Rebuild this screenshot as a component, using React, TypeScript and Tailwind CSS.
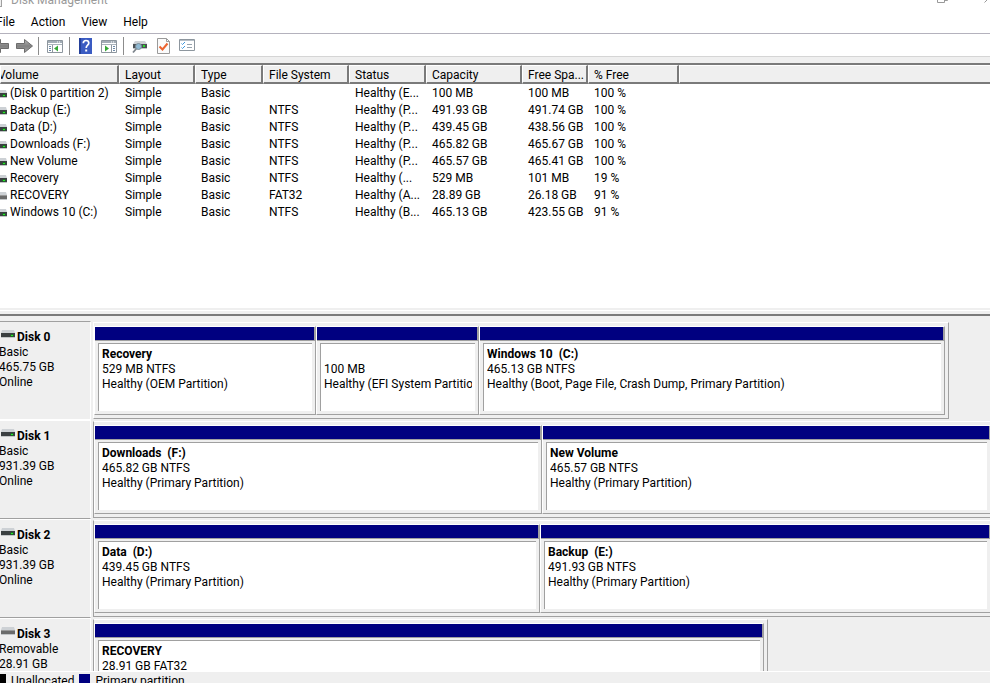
import React from 'react';

const menus = ['File', 'Action', 'View', 'Help'];

const columns = [
  { label: 'Volume', width: 'w-[119px]' },
  { label: 'Layout', width: 'w-[76px]' },
  { label: 'Type', width: 'w-[68px]' },
  { label: 'File System', width: 'w-[86px]' },
  { label: 'Status', width: 'w-[77px]' },
  { label: 'Capacity', width: 'w-[96px]' },
  { label: 'Free Spa...', width: 'w-[66px]' },
  { label: '% Free', width: 'w-[91px]' },
];

const volumes = [
  ['(Disk 0 partition 2)', 'Simple', 'Basic', '', 'Healthy (E...', '100 MB', '100 MB', '100 %'],
  ['Backup (E:)', 'Simple', 'Basic', 'NTFS', 'Healthy (P...', '491.93 GB', '491.74 GB', '100 %'],
  ['Data (D:)', 'Simple', 'Basic', 'NTFS', 'Healthy (P...', '439.45 GB', '438.56 GB', '100 %'],
  ['Downloads (F:)', 'Simple', 'Basic', 'NTFS', 'Healthy (P...', '465.82 GB', '465.67 GB', '100 %'],
  ['New Volume', 'Simple', 'Basic', 'NTFS', 'Healthy (P...', '465.57 GB', '465.41 GB', '100 %'],
  ['Recovery', 'Simple', 'Basic', 'NTFS', 'Healthy (...', '529 MB', '101 MB', '19 %'],
  ['RECOVERY', 'Simple', 'Basic', 'FAT32', 'Healthy (A...', '28.89 GB', '26.18 GB', '91 %'],
  ['Windows 10 (C:)', 'Simple', 'Basic', 'NTFS', 'Healthy (B...', '465.13 GB', '423.55 GB', '91 %'],
];

type Partition = { name: string; size: string; status?: string; share: number };
type Disk = {
  name: string;
  kind: string;
  size: string;
  state?: string;
  removable?: boolean;
  extent: number;
  partitions: Partition[];
};

// extent: how far the disk's frame reaches, in percent of the graph's width
const disks: Disk[] = [
  {
    name: 'Disk 0',
    kind: 'Basic',
    size: '465.75 GB',
    state: 'Online',
    extent: 95.43,
    partitions: [
      { name: 'Recovery', size: '529 MB NTFS', status: 'Healthy (OEM Partition)', share: 220 },
      { name: '', size: '100 MB', status: 'Healthy (EFI System Partition)', share: 161 },
      {
        name: 'Windows 10  (C:)',
        size: '465.13 GB NTFS',
        status: 'Healthy (Boot, Page File, Crash Dump, Primary Partition)',
        share: 464,
      },
    ],
  },
  {
    name: 'Disk 1',
    kind: 'Basic',
    size: '931.39 GB',
    state: 'Online',
    extent: 100.56,
    partitions: [
      { name: 'Downloads  (F:)', size: '465.82 GB NTFS', status: 'Healthy (Primary Partition)', share: 446 },
      { name: 'New Volume', size: '465.57 GB NTFS', status: 'Healthy (Primary Partition)', share: 447 },
    ],
  },
  {
    name: 'Disk 2',
    kind: 'Basic',
    size: '931.39 GB',
    state: 'Online',
    extent: 100.56,
    partitions: [
      { name: 'Data  (D:)', size: '439.45 GB NTFS', status: 'Healthy (Primary Partition)', share: 444 },
      { name: 'Backup  (E:)', size: '491.93 GB NTFS', status: 'Healthy (Primary Partition)', share: 449 },
    ],
  },
  {
    name: 'Disk 3',
    kind: 'Removable',
    size: '28.91 GB',
    removable: true,
    extent: 75.25,
    partitions: [{ name: 'RECOVERY', size: '28.91 GB FAT32', share: 668 }],
  },
];

const DriveIcon = ({ removable = false }: { removable?: boolean }) => (
  <svg width="14" height="8" viewBox="0 0 14 8" className="shrink-0" aria-hidden="true">
    <path d="M1 0h12l1 3H0z" fill="#cdd1d5" />
    <path d="M0 3h14v4H0z" fill={removable ? '#6b6b6b' : '#3a3f41'} />
    <path d="M0 7h14v1H0z" fill="#c2c5c7" />
    {removable && <path d="M0 3h14v1H0z" fill="#9a9a9a" />}
    {!removable && <path d="M10 5h2v1h-2z" fill="#2be02b" />}
    {!removable && <path d="M9 5h1v1H9zM12 5h1v1h-1zM10 4h2v1h-2zM10 6h2v1h-2z" fill="#1d6a26" />}
  </svg>
);

const ArrowIcon = ({ back = false }: { back?: boolean }) => (
  <svg width="17" height="16" viewBox="0 0 17 16" aria-hidden="true">
    <defs>
      <linearGradient id={back ? 'arrow-back' : 'arrow-next'} x1="0" y1="0" x2="0" y2="1">
        <stop offset="0" stopColor="#b8b8b8" />
        <stop offset="0.5" stopColor="#808080" />
        <stop offset="1" stopColor="#a8a8a8" />
      </linearGradient>
    </defs>
    <path
      d={back ? 'M16.5 5.5H8.5V1.5L.5 8l8 6.5v-4h8z' : 'M.5 5.5h8v-4l8 6.5-8 6.5v-4h-8z'}
      fill={back ? 'url(#arrow-back)' : 'url(#arrow-next)'}
      stroke="#6c6c6c"
    />
  </svg>
);

// console window with the tree pane on the left or the action pane on the right
const PaneIcon = ({ right = false }: { right?: boolean }) => (
  <svg width="17" height="16" viewBox="0 0 17 16" aria-hidden="true">
    <path d="M.5 2.5h15v12H.5z" fill="#fff" stroke="#8d969e" />
    <path d="M1 3h14v2H1z" fill="#a3adb6" />
    <path d="M10 3.5h1v1h-1zM12 3.500h1v1h-1z" fill="#fff" />
    <path d="M1 6.5h14" stroke="#aab4bc" />
    {right ? (
      <>
        <path d="M10.5 7v7" stroke="#8d969e" />
        <path d="M12 8.5h2M12 10.5h2M12 12.5h2" stroke="#6c89a8" />
        <path d="M4 7.5l4 3-4 3z" fill="#35a835" />
      </>
    ) : (
      <>
        <path d="M5.5 7v7" stroke="#8d969e" />
        <path d="M2 8.5h2M2 10.5h2M2 12.5h2" stroke="#6c89a8" />
        <path d="M11 7.5l-4 3 4 3z" fill="#35a835" />
      </>
    )}
  </svg>
);

const HelpIcon = () => (
  <svg width="13" height="16" viewBox="0 0 13 16" aria-hidden="true">
    <path d="M0 0h13v16H0z" fill="#3a5bc2" />
    <path d="M0 0h2v16H0z" fill="#24409a" />
    <path
      d="M4.3 5.2C4.300 3.300 5.500 2.500 7 2.500s2.800.9 2.800 2.500c0 2.200-2.600 2.300-2.600 5"
      fill="none"
      stroke="#fff"
      strokeWidth="1.7"
    />
    <path d="M6.200 11.500h2v2h-2z" fill="#fff" />
  </svg>
);

const RescanIcon = () => (
  <svg width="16" height="16" viewBox="0 0 16 16" aria-hidden="true">
    <path d="M3 3h10l2 3H1z" fill="#cdd1d5" />
    <path d="M1 6h14v4H1z" fill="#4a5054" />
    <path d="M1 10h14v1H1z" fill="#c2c5c7" />
    <path d="M11 7h2v2h-2z" fill="#2be02b" />
    <path d="M4.500 10.500L1 14.500" stroke="#7d858c" strokeWidth="1.800" />
    <circle cx="6.500" cy="8.500" r="3" fill="#8fb9d3" stroke="#7b8d99" />
  </svg>
);

const PropertiesIcon = () => (
  <svg width="13" height="16" viewBox="0 0 13 16" aria-hidden="true">
    <path d="M.5.5h9l3 3v12H.5z" fill="#fbfbfb" stroke="#9a9a9a" />
    <path d="M9.5.5v3h3" fill="none" stroke="#9a9a9a" />
    <path d="M2.500 8.500l3 3 5-6" fill="none" stroke="#ec6430" strokeWidth="2" />
  </svg>
);

const ChecklistIcon = () => (
  <svg width="16" height="13" viewBox="0 0 16 13" aria-hidden="true">
    <path d="M.5.5h15v11H.5z" fill="#fff" stroke="#8d969e" />
    <path d="M1 1.500h14" stroke="#b6bfc7" />
    <path d="M2.500 4.500l1 1 2.500-2.500M2.500 8.500l1 1L6 7" fill="none" stroke="#3d97dd" />
    <path d="M8 5.500h5M8 8.500h5" stroke="#98a4ae" />
  </svg>
);

const Separator = () => <span className="w-px h-[18px] bg-[#8c8c8c]" />;

const Toolbar = () => (
  <div className="flex items-center h-[23px] pt-px shrink-0 bg-white border-b border-[#d5d5d5] overflow-hidden">
    <button aria-label="Back" className="-ml-2"><ArrowIcon back /></button>
    <button aria-label="Forward" className="ml-[7px] mr-[5px]"><ArrowIcon /></button>
    <Separator />
    <button aria-label="Show or hide console tree" className="ml-2 mr-[5px]"><PaneIcon /></button>
    <Separator />
    <button aria-label="Help" className="ml-[9px]"><HelpIcon /></button>
    <button aria-label="Show or hide action pane" className="ml-[9px] mr-[5px]"><PaneIcon right /></button>
    <Separator />
    <button aria-label="Rescan disks" className="ml-2"><RescanIcon /></button>
    <button aria-label="Properties" className="ml-[9px]"><PropertiesIcon /></button>
    <button aria-label="Settings" className="ml-[9px]"><ChecklistIcon /></button>
  </div>
);

const VolumeTable = () => (
  <table className="w-full table-fixed border-collapse text-left">
    <thead>
      <tr className="h-5 align-top">
        {columns.map((column) => (
          <th key={column.label} className={`${column.width} p-0 font-normal`}>
            <div className="h-[19px] pl-[5px] leading-[19px] bg-[#efefef] whitespace-nowrap overflow-hidden border-t border-l border-t-white border-l-white border-b-2 border-b-[#7a7a7a] border-r-2 border-r-[#7a7a7a]">
              <span className={column.label === 'Volume' ? '-ml-2' : ''}>{column.label}</span>
            </div>
          </th>
        ))}
        <th className="p-0">
          <div className="h-[19px] bg-[#efefef] border-t border-l border-t-white border-l-white border-b-2 border-b-[#7a7a7a]" />
        </th>
      </tr>
    </thead>
    <tbody>
      {volumes.map((row) => (
        <tr key={row[0]} className="h-[17px]">
          {row.map((value, i) => (
            <td key={i} className="p-0 leading-[17px] whitespace-nowrap">
              {i === 0 ? (
                <div className="flex items-center gap-[3px] -ml-[7px]">
                  <DriveIcon removable={value === 'RECOVERY'} />
                  {value}
                </div>
              ) : (
                <div className="pl-[6px]">{value}</div>
              )}
            </td>
          ))}
          <td />
        </tr>
      ))}
    </tbody>
  </table>
);

const PartitionBox = ({ partition }: { partition: Partition }) => (
  <div
    className="flex flex-col basis-0 min-w-0 h-[89px] border border-white border-r-[#a0a0a0] border-b-[#a0a0a0]"
    style={{ flexGrow: partition.share }}
  >
    <div className="h-[14px] bg-[#000080] border-b border-r border-[#a0a0a0]" />
    <div className="flex-1 mt-[2px] mx-[3px] mb-[3px] px-[3px] pt-[3px] bg-white border-t border-l border-[#a0a0a0]">
      <div className="overflow-hidden whitespace-pre leading-[15px]">
        <h3 className="h-[15px] font-bold">{partition.name}</h3>
        <p>{partition.size}</p>
        {partition.status && <p>{partition.status}</p>}
      </div>
    </div>
  </div>
);

const DiskRow = ({ disk, first }: { disk: Disk; first: boolean }) => (
  <div className="flex h-[99px] shrink-0">
    <div
      className={`w-[91px] shrink-0 pt-2 leading-[15px] border-t border-b border-r border-r-white ${
        first ? 'border-t-[#a0a0a0] border-b-white' : 'border-t-white border-b-[#a0a0a0]'
      }`}
    >
      <div className="flex gap-[2px] ml-px font-bold">
        <DriveIcon removable={disk.removable} />
        <h2>{disk.name}</h2>
      </div>
      <div className="-ml-px">
        <p>{disk.kind}</p>
        <p>{disk.size}</p>
        {disk.state && <p>{disk.state}</p>}
      </div>
    </div>
    <div className="flex-1 min-w-0 ml-[2px] overflow-hidden">
      <div
        className={`flex h-[97px] mt-px pt-[3px] pr-[3px] border border-t-white border-r-[#a0a0a0] border-b-[#a0a0a0] ${
          first ? 'border-l-white' : 'border-l-[#a0a0a0]'
        }`}
        style={{ width: `${disk.extent}%` }}
      >
        {disk.partitions.map((partition) => (
          <PartitionBox key={partition.size} partition={partition} />
        ))}
      </div>
    </div>
  </div>
);

export default function App() {
  return (
    <div className="flex flex-col h-screen overflow-hidden bg-[#efefef] text-black text-xs font-['Roboto','Segoe_UI',sans-serif]">
      {/* Title bar */}
      <header className="flex justify-between items-end h-2 shrink-0 overflow-hidden bg-white text-[#9a9a9a]">
        <div className="flex items-end gap-[9px]">
          <span className="w-[6px] h-2 -ml-1 mb-px border border-[#a0a0a0] bg-[#efefef]" />
          <h1 className="leading-4">Disk Management</h1>
        </div>
        <div className="flex items-end gap-9 -mr-[5px]">
          <svg width="11" height="11" viewBox="0 0 11 11" className="mb-[5px]" fill="none" stroke="#999" aria-hidden="true">
            <path d="M.5 2.500h7v8h-7zM2.500 2V.500h8v8H8" />
          </svg>
          <svg width="11" height="11" viewBox="0 0 11 11" className="mb-[5px]" fill="none" stroke="#999" aria-hidden="true">
            <path d="M.5.500l10 10M10.500.500l-10 10" />
          </svg>
        </div>
      </header>

      {/* Menu */}
      <nav className="flex gap-4 h-[26px] pt-[2px] shrink-0 bg-white border-b border-[#b4b2bd]">
        {menus.map((menu) => (
          <button key={menu} className="first:-ml-1">{menu}</button>
        ))}
      </nav>

      <Toolbar />

      {/* Volume list */}
      <section className="h-[246px] mt-[6px] shrink-0 overflow-hidden bg-white border-t-2 border-t-[#7a7a7a] border-b border-b-[#efefef]">
        <VolumeTable />
      </section>

      {/* Splitter */}
      <div className="h-1 mt-px shrink-0 border-t border-white" />

      {/* Disk graph */}
      <section className="flex flex-col flex-1 min-h-0 pt-[5px] overflow-hidden border-t-2 border-[#7a7a7a]">
        {disks.map((disk, i) => (
          <DiskRow key={disk.name} disk={disk} first={i === 0} />
        ))}
      </section>

      {/* Legend */}
      <footer className="flex gap-[5px] h-3 shrink-0 pt-[2px] overflow-hidden border-t border-white leading-[15px]">
        <span className="w-[11px] h-3 -ml-[5px] bg-black" />
        <span>Unallocated</span>
        <span className="w-[11px] h-3 bg-[#000080]" />
        <span>Primary partition</span>
      </footer>
    </div>
  );
}
